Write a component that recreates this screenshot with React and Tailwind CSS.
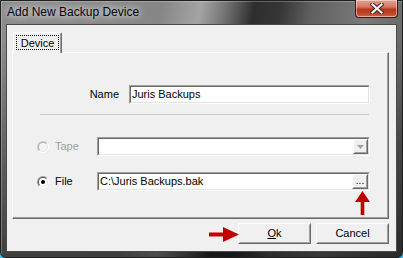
import { Fragment } from 'react'

// classic sunken 3d edit box
const Sunken = ({ className, children }) => (
  <div className={`border border-t-[#a0a0a0] border-l-[#a0a0a0] border-r-white border-b-white ${className}`}>
    <div className="w-full h-full border border-t-[#696969] border-l-[#696969] border-r-[#e3e3e3] border-b-[#e3e3e3] bg-white flex items-center">
      {children}
    </div>
  </div>
)

const Raised = ({ className, children }) => (
  <div className={`border border-t-white border-l-white border-r-[#696969] border-b-[#696969] bg-[#f0f0f0] ${className}`}>
    <div className="w-full h-full border border-t-[#f0f0f0] border-l-[#f0f0f0] border-r-[#a0a0a0] border-b-[#a0a0a0] flex items-center justify-center">
      {children}
    </div>
  </div>
)

const Radio = ({ id, checked, disabled }) => (
  <svg width="12" height="12" viewBox="0 0 12 12">
    <defs>
      <linearGradient id={`o${id}`} x1="0" y1="0" x2="1" y2="1">
        <stop offset="0.45" stopColor={disabled ? '#c8c8c8' : '#9a9a9a'} />
        <stop offset="0.55" stopColor="#ffffff" />
      </linearGradient>
      <linearGradient id={`i${id}`} x1="0" y1="0" x2="1" y2="1">
        <stop offset="0.45" stopColor={disabled ? '#b4b4b4' : '#5a5a5a'} />
        <stop offset="0.55" stopColor="#e3e3e3" />
      </linearGradient>
    </defs>
    <circle cx="6" cy="6" r="6" fill={`url(#o${id})`} />
    <circle cx="6" cy="6" r="5" fill={`url(#i${id})`} />
    <circle cx="6" cy="6" r="4" fill={disabled ? '#f4f4f4' : '#ffffff'} />
    {checked && <circle cx="6" cy="6" r="2" fill="#000" />}
  </svg>
)

const App = () => {
  return (
    <div className="relative w-[403px] h-[258px] bg-[#3fb3e2] overflow-hidden font-['Liberation_Sans',Arial,sans-serif] text-[11px] text-black">
      <div className="w-[403px] h-[258px] rounded-b-[6px] border border-[#1e1e1e] flex flex-col bg-[linear-gradient(to_bottom,rgba(0,0,0,0)_0px,rgba(0,0,0,0)_40px,rgba(0,0,0,0.3)_150px,rgba(0,0,0,0.55)_258px),linear-gradient(100deg,#8c8c8c_0%,#868686_36%,#a4a4a4_45%,#707070_51%,#2e2e2e_57%,#363636_63%,#606060_70%,#7a7a7a_82%,#5a5a5a_100%)] shadow-[inset_1px_1px_0_rgba(255,255,255,0.25)]">
        {/* title bar */}
        <div className="h-[23px] flex justify-between items-start">
          <div className="pl-[6px] pt-[3px] text-[12px] leading-[16px] text-[#050510] [text-shadow:0_0_6px_rgba(255,255,255,0.95),0_0_12px_rgba(255,255,255,0.7)]">
            Add New Backup Device
          </div>
          <div className="w-[43px] h-[18px] -mt-[1px] mr-[4px] rounded-b-[4px] border border-t-0 border-[#3a1a14] bg-[linear-gradient(to_bottom,#e3a08e_0%,#d47a63_40%,#b9371f_55%,#c44a2c_85%,#d8704e_100%)] shadow-[inset_0_0_0_1px_rgba(255,255,255,0.45)] flex items-center justify-center">
            <svg width="14" height="11" viewBox="0 0 14 11">
              <path d="M2.5 1.5 L11.5 9.5 M11.5 1.5 L2.5 9.5" stroke="#3b2626" strokeWidth="4.2" strokeLinecap="square" />
              <path d="M2.5 1.5 L11.5 9.5 M11.5 1.5 L2.5 9.5" stroke="#f4f4f4" strokeWidth="2.2" strokeLinecap="square" />
            </svg>
          </div>
        </div>

        {/* client area */}
        <div className="mx-[5px] h-[228px] border border-[#4a4a4a] bg-[#f0f0f0] pl-[5px] pr-[7px] pt-[7px] flex flex-col">
          {/* tabs */}
          <div className="flex pl-[1px]">
            <div className="relative z-10 -mb-[1px] w-[49px] h-[21px] rounded-t-[2px] border border-b-0 border-t-white border-l-white border-r-[#696969] bg-[#f0f0f0] shadow-[inset_-1px_0_0_#a0a0a0] p-[2px] pb-[3px]">
              <div className="h-full border border-dotted border-black flex items-center justify-center leading-[12px]">
                Device
              </div>
            </div>
          </div>

          {/* tab page */}
          <div className="h-[167px] border border-t-white border-l-white border-r-[#696969] border-b-[#696969] shadow-[inset_-1px_-1px_0_#a0a0a0] flex flex-col">
            <div className="mt-[32px] flex items-center">
              <div className="w-[116px] pr-[10px] text-right">Name</div>
              <Sunken className="w-[241px] h-[19px]">
                <span className="pl-[1px] leading-[13px]">Juris Backups</span>
              </Sunken>
            </div>

            <div className="mt-[10px] ml-[27px] w-[329px] border-t border-[#c3ccd4]" />

            <div className="mt-[22px] pl-[24px] flex items-center">
              <div className="w-[60px] flex items-center gap-[6px] text-[#a0a0a0]">
                <Radio id="tape" disabled />
                <span>Tape</span>
              </div>
              <Sunken className="w-[273px] h-[19px]">
                <div className="flex-1" />
                <Raised className="w-[15px] h-full">
                  <svg width="7" height="4" viewBox="0 0 7 4">
                    <path d="M0 0 H7 L3.5 4 Z" fill="#a0a0a0" />
                  </svg>
                </Raised>
              </Sunken>
            </div>

            <div className="mt-[16px] pl-[24px] flex items-center">
              <div className="w-[60px] flex items-center gap-[6px]">
                <Radio id="file" checked />
                <span>File</span>
              </div>
              <Sunken className="w-[273px] h-[19px]">
                <span className="flex-1 pl-[1px] leading-[13px]">C:\Juris Backups.bak</span>
                <Raised className="w-[16px] h-full">
                  <span className="leading-[8px] text-[10px] -mt-[2px]">...</span>
                </Raised>
              </Sunken>
            </div>
          </div>

          {/* buttons */}
          <div className="mt-[4px] flex justify-end gap-[5px]">
            <Raised className="w-[73px] h-[21px]">
              <span><span className="underline">O</span>k</span>
            </Raised>
            <Raised className="w-[73px] h-[21px]">
              <span>Cancel</span>
            </Raised>
          </div>
        </div>
      </div>

      {/* red annotation arrows */}
      <svg className="absolute left-[355px] top-[191px]" width="15" height="24" viewBox="0 0 15 24">
        <path d="M7.5 0 L15 11 H9.3 V24 H5.7 V11 H0 Z" fill="#c00000" />
      </svg>
      <svg className="absolute left-[209px] top-[227px]" width="30" height="15" viewBox="0 0 30 15">
        <path d="M30 7.5 L14 0 V5.5 H0 V9.5 H14 V15 Z" fill="#c00000" />
      </svg>
    </div>
  )
}
export default App
